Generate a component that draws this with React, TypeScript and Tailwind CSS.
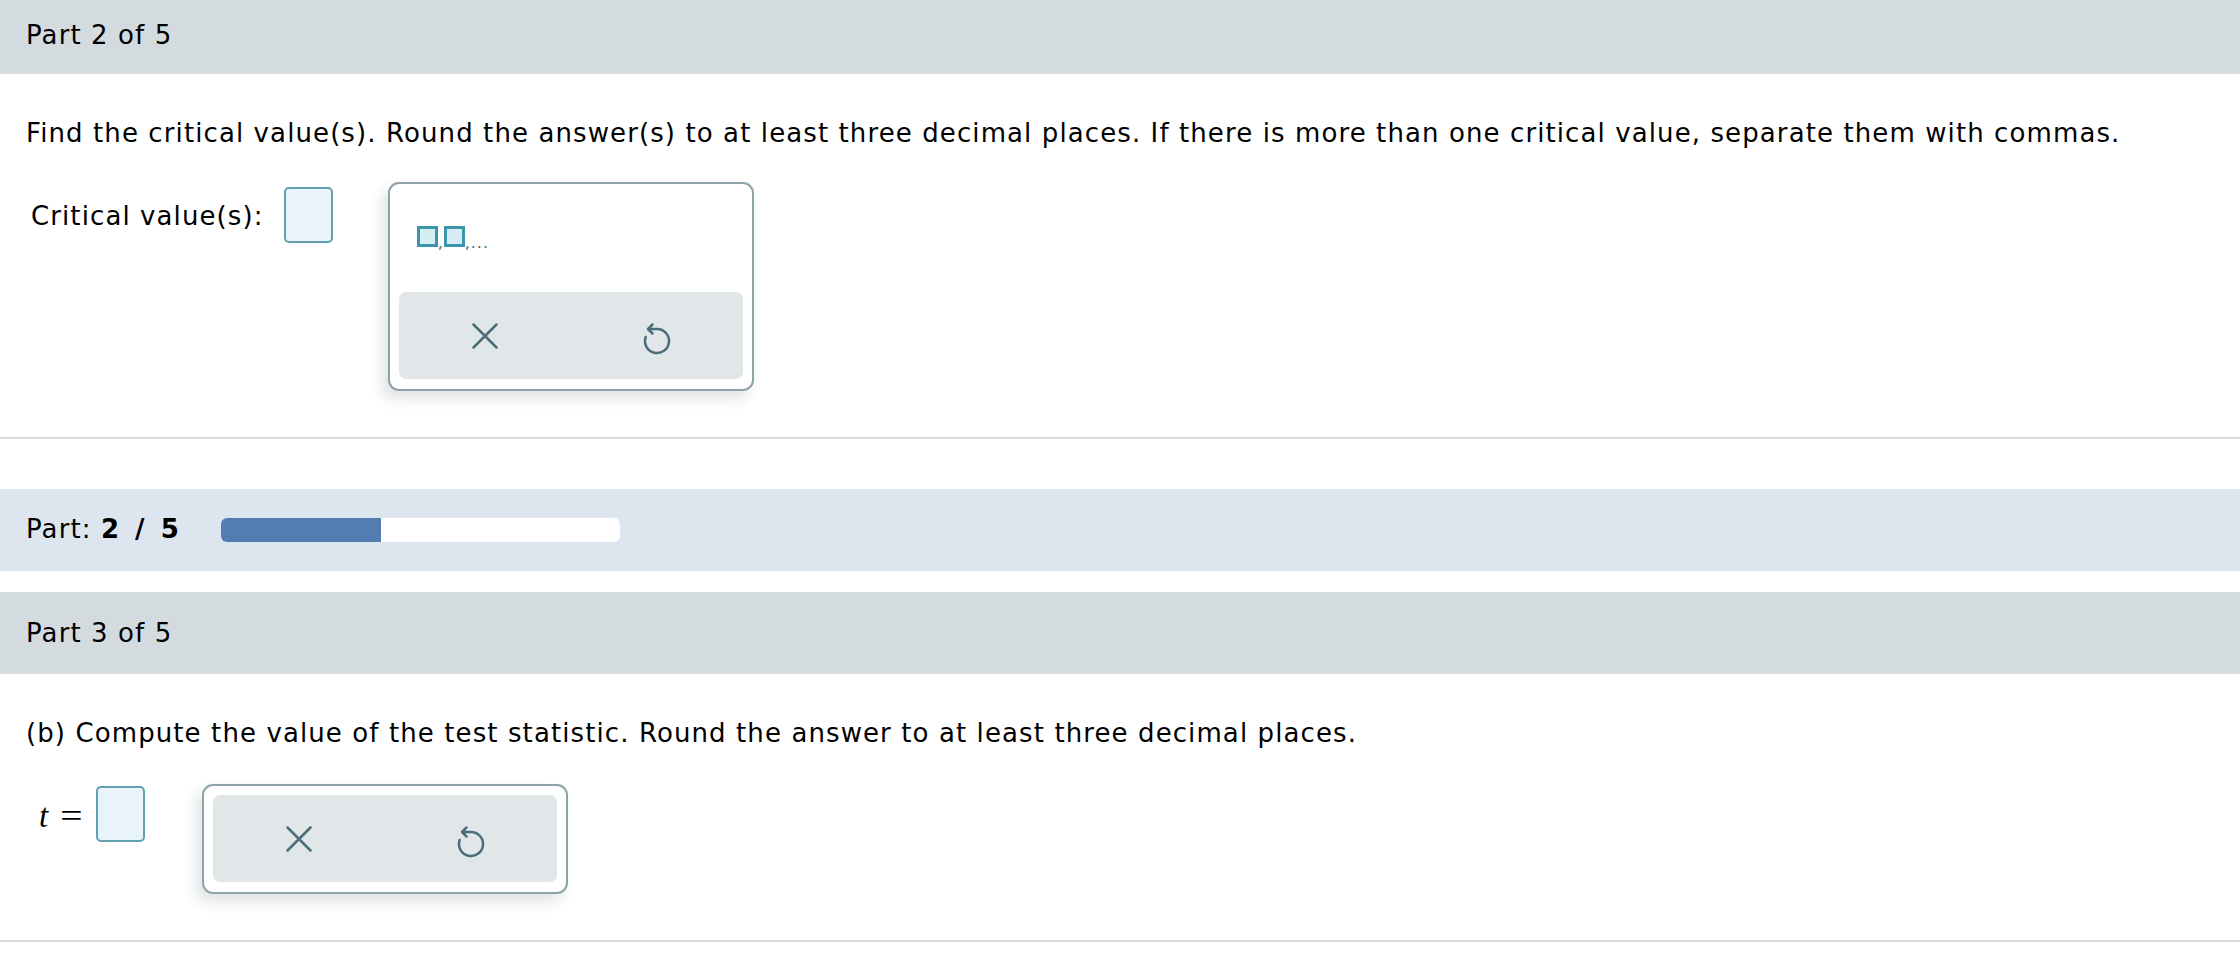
import React from "react";

function XIcon() {
  return (
    <svg width="26" height="26" viewBox="0 0 26 26" fill="none">
      <path d="M1.5 1.5 L24.5 24.5 M24.5 1.5 L1.5 24.5" stroke="#4b6c7b" strokeWidth="2.5" strokeLinecap="round" />
    </svg>
  );
}

function UndoIcon() {
  return (
    <svg width="40" height="40" viewBox="0 0 40 40" fill="none">
      <path
        d="M15.5 8.5 L11 13 L15.5 17.5 M11 13 L20 13 A12 12 0 1 1 8.7 21"
        stroke="#4b6c7b"
        strokeWidth="2.5"
        strokeLinecap="round"
        strokeLinejoin="round"
      />
    </svg>
  );
}

function Square() {
  return <span className="block w-[21px] h-[21px] border-[3px] border-[#3d95ac] bg-[#d5edf3]" />;
}

function ButtonBar() {
  return (
    <div className="grid grid-cols-2 h-[87px] rounded-[7px] bg-[#e1e6e9]">
      <div className="flex items-center justify-center">
        <XIcon />
      </div>
      <div className="flex items-center justify-center">
        <UndoIcon />
      </div>
    </div>
  );
}

function AnswerInput() {
  return <div className="w-[49px] h-[56px] rounded-[5px] border-2 border-[#629fb0] bg-[#e8f4f9]" />;
}

export default function App() {
  return (
    <div className="w-[2240px] h-[970px] bg-white text-black font-['DejaVu_Sans',sans-serif] text-[26px] tracking-[1.1px]">
      {/* Part 2 header */}
      <div className="h-[74px] bg-[#d3dbdf] flex items-center pl-[26px] pb-[5px] leading-[30px]">Part 2 of 5</div>

      <p className="mt-[44px] pl-[26px] leading-[30px]">
        Find the critical value(s). Round the answer(s) to at least three decimal places. If there is more than one critical value, separate them with commas.
      </p>

      <div className="mt-[34px] flex items-start pl-[31px]">
        <span className="mt-[19px] leading-[30px]">Critical value(s):</span>
        <div className="ml-[20px] mt-[5px]">
          <AnswerInput />
        </div>
        <div className="ml-[55px] w-[366px] h-[209px] rounded-[11px] border-2 border-[#8ea2aa] bg-white shadow-[-6px_8px_14px_rgba(40,60,70,0.14)] flex flex-col">
          <div className="flex items-end ml-[27px] mt-[42px] text-[#4b6c7b] text-[16px] leading-none tracking-normal">
            <Square />
            <span className="mb-[-4px] w-[6px]">,</span>
            <Square />
            <span className="mb-[-4px] tracking-[1px]">,...</span>
          </div>
          <div className="mt-auto mx-[9px] mb-[10px]">
            <ButtonBar />
          </div>
        </div>
      </div>

      <div className="mt-[46px] h-[2px] bg-[#d5dadd]" />

      {/* Progress band */}
      <div className="mt-[50px] h-[82px] bg-[#dde6ef] flex items-center pl-[26px]">
        <span className="leading-[30px] mt-[-2px]">
          Part: <b className="font-bold tracking-[3.5px]">2 / 5</b>
        </span>
        <div className="ml-[39px] w-[399px] h-[24px] rounded-[6px] bg-white overflow-hidden">
          <div className="h-full w-[160px] bg-[#537cb0]" />
        </div>
      </div>

      {/* Part 3 header */}
      <div className="mt-[21px] h-[82px] bg-[#d3dbdf] flex items-center pl-[26px] leading-[30px]">Part 3 of 5</div>

      <p className="mt-[44px] pl-[26px] leading-[30px]">
        (b) Compute the value of the test statistic. Round the answer to at least three decimal places.
      </p>

      <div className="mt-[36px] flex items-start pl-[39px]">
        <span className="mt-[15px] flex items-center leading-[34px] font-['Liberation_Serif',serif] text-[33px] tracking-normal">
          <i>t</i>
          <span className="ml-[14px] scale-x-[1.2]">=</span>
        </span>
        <div className="ml-[15px] mt-[2px]">
          <AnswerInput />
        </div>
        <div className="ml-[57px] w-[366px] h-[110px] rounded-[11px] border-2 border-[#8ea2aa] bg-white shadow-[-6px_8px_14px_rgba(40,60,70,0.14)] p-[9px] pb-[10px]">
          <ButtonBar />
        </div>
      </div>

      <div className="mt-[46px] h-[2px] bg-[#d5dadd]" />
    </div>
  );
}
